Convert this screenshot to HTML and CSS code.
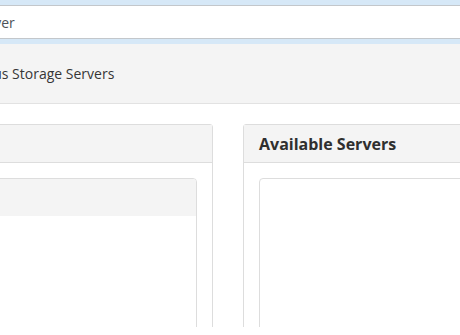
FILE: index.html
```html
<!DOCTYPE html>
<html>
<head>
	<meta charset="utf-8">

	<title>Nimbus Storage Servers</title>

	<link rel="stylesheet" href="styles.css">
</head>

<body>
	<div class="searchBar">
		<input type="text" class="searchField" value="Search Server">
	</div>

	<div class="intro">
		<p class="introText">Add Nimbus Storage Servers</p>
	</div>

	<div class="panels">
		<div class="panel">
			<div class="panelHeading">
				<h3 class="panelTitle">Selected Servers</h3>
			</div>
			<div class="panelBody">
				<div class="serverList">
					<div class="listHead"></div>
				</div>
			</div>
		</div>

		<div class="panel">
			<div class="panelHeading">
				<h3 class="panelTitle">Available Servers</h3>
			</div>
			<div class="panelBody">
				<div class="serverList"></div>
			</div>
		</div>
	</div>
</body>
</html>
```

FILE: styles.css
```css
html {
	font-family: 'Open Sans', sans-serif;
	box-sizing: border-box;
}
*, *:before, *:after {
	box-sizing: inherit;
}
body {
	margin: 0;
	overflow: hidden;
	color: #363636;
	font-size: 14px;
}
.searchBar {
	background-color: #d6e8f7;
	padding: 5px 0;
}
.searchField {
	display: block;
	width: 700px;
	height: 34px;
	margin: 0 0 0 -88px;
	padding: 0 12px;
	border: 1px solid #c3c7cb;
	background: #fff;
	font-family: 'Open Sans', sans-serif;
	font-size: 14px;
	color: #4d5258;
	outline: none;
}
.intro {
	background-color: #f4f4f4;
	border-bottom: 1px solid #e2e2e2;
	height: 60px;
	display: flex;
	align-items: center;
}
.introText {
	margin: 0 0 0 -72px;
	white-space: nowrap;
}
.panels {
	display: flex;
	gap: 30px;
	margin: 20px 0 0 -187px;
	height: 203px;
	overflow: hidden;
}
.panel {
	flex: 0 0 400px;
	height: 260px;
	border: 1px solid #dddddd;
	border-radius: 3px;
}
.panelHeading {
	background-color: #f4f4f4;
	border-bottom: 1px solid #dddddd;
	height: 38px;
	padding: 0 15px;
	display: flex;
	align-items: center;
}
.panelTitle {
	margin: 0;
	font-size: 16px;
	font-weight: 700;
	color: #2f2f2f;
}
.panelBody {
	padding: 15px;
}
.serverList {
	height: 200px;
	border: 1px solid #dddddd;
	border-radius: 4px;
	overflow: hidden;
}
.listHead {
	height: 37px;
	background-color: #f4f4f4;
}
```
